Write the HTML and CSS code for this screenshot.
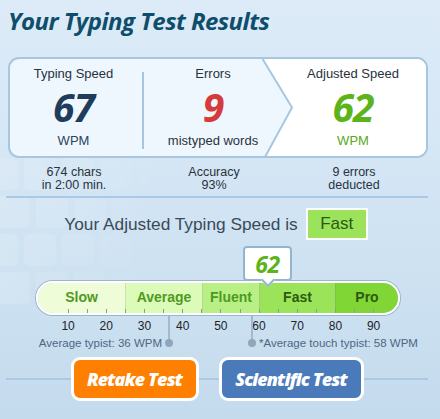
FILE: index.html
```html
<!DOCTYPE html>
<html>
<head>
<meta charset="utf-8">
<link rel="stylesheet" href="styles.css">
</head>
<body>
<div class="keys" aria-hidden="true">
  <i></i><i></i><i></i><i></i><i></i>
  <i></i><i></i><i></i><i></i><i></i>
  <i></i><i></i><i></i><i></i><i></i>
  <i></i><i></i><i></i><i></i><i></i>
</div>
<div class="page">
  <h1 class="title">Your Typing Test Results</h1>
  <div class="card">
    <div class="col col-speed">
      <div class="label">Typing Speed</div>
      <div class="big big-speed">67</div>
      <div class="unit">WPM</div>
    </div>
    <div class="divider"></div>
    <div class="col col-errors">
      <div class="label">Errors</div>
      <div class="big big-errors">9</div>
      <div class="unit">mistyped words</div>
    </div>
    <div class="col col-adjusted">
      <svg class="chevron" width="34" height="97" viewBox="0 0 34 97"><polyline points="0,-1 30,48.5 3,98" fill="none" stroke="#a7c7e0" stroke-width="2"/></svg>
      <div class="col-inner">
        <div class="label">Adjusted Speed</div>
        <div class="big big-adjusted">62</div>
        <div class="unit unit-green">WPM</div>
      </div>
    </div>
  </div>
  <div class="stats">
    <div>674 chars<br>in 2:00 min.</div>
    <div>Accuracy<br>93%</div>
    <div>9 errors<br>deducted</div>
  </div>
  <div class="rule"></div>
  <div class="verdict">
    <span class="verdict-text">Your Adjusted Typing Speed is</span>
    <span class="badge">Fast</span>
  </div>
  <div class="scale">
    <div class="tooltip">62</div>
    <div class="bar">
      <div class="seg seg-slow">Slow</div>
      <div class="seg seg-average">Average</div>
      <div class="seg seg-fluent">Fluent</div>
      <div class="seg seg-fast">Fast</div>
      <div class="seg seg-pro">Pro</div>
    </div>
    <div class="labels">
      <span>10</span><span>20</span><span>30</span><span>40</span><span>50</span><span>60</span><span>70</span><span>80</span><span>90</span>
    </div>
    <div class="pin pin-avg"><span class="pin-label">Average typist: 36 WPM</span></div>
    <div class="pin pin-touch"><span class="pin-label">*Average touch typist: 58 WPM</span></div>
  </div>
  <div class="actions">
    <a class="btn btn-orange">Retake Test</a>
    <a class="btn btn-blue">Scientific Test</a>
  </div>
</div>
</body>
</html>
```
FILE: styles.css
```css
html, body {
  margin: 0;
  padding: 0;
}
body {
  position: relative;
  width: 440px;
  height: 419px;
  overflow: hidden;
  background: linear-gradient(to bottom, #ddebf8 0%, #d3e5f4 45%, #c4dbed 100%);
  font-family: "Liberation Sans", Arial, sans-serif;
  color: #2a3340;
}
.keys {
  position: absolute;
  left: -14px;
  top: 158px;
  display: grid;
  grid-template-columns: repeat(5, 32px);
  grid-auto-rows: 32px;
  gap: 6px;
  -webkit-mask-image: linear-gradient(to right, #000 0%, rgba(0,0,0,0.5) 55%, transparent 100%);
  mask-image: linear-gradient(to right, #000 0%, rgba(0,0,0,0.5) 55%, transparent 100%);
  z-index: 0;
}
.keys i {
  display: block;
  border-radius: 5px;
  background: rgba(255, 255, 255, 0.16);
}
.keys i:nth-child(10n+6),
.keys i:nth-child(10n+7),
.keys i:nth-child(10n+8),
.keys i:nth-child(10n+9),
.keys i:nth-child(10n+10) {
  transform: translateX(12px);
}
.page {
  position: relative;
  z-index: 1;
  padding: 0 12px 0 8px;
}
.title {
  margin: 0;
  height: 57px;
  box-sizing: border-box;
  padding-top: 6px;
  font-family: "Open Sans", sans-serif;
  font-style: italic;
  font-weight: 700;
  font-size: 24px;
  line-height: 30px;
  letter-spacing: -0.55px;
  color: #0e4e6c;
}
.card {
  display: flex;
  height: 101px;
  box-sizing: border-box;
  border: 2px solid #a7c7e0;
  border-radius: 11px;
  background: #eff7fe;
  overflow: hidden;
}
.col {
  display: flex;
  flex-direction: column;
  align-items: center;
  padding-top: 7px;
  box-sizing: border-box;
  text-align: center;
}
.col-speed {
  width: 132px;
  padding-right: 5px;
}
.divider {
  width: 2px;
  background: #a9c5dd;
  margin: 13px 0 7px;
}
.col-errors {
  width: 118px;
  padding-left: 20px;
}
.col-adjusted {
  flex: 1;
  position: relative;
  padding-top: 0;
}
.col-adjusted::before {
  content: "";
  position: absolute;
  inset: 0;
  background: #fff;
  clip-path: polygon(0 0, 100% 0, 100% 100%, 3px 100%, 30px 50%);
}
.chevron {
  position: absolute;
  left: 0;
  top: 0;
}
.col-inner {
  position: relative;
  display: flex;
  flex-direction: column;
  align-items: center;
  padding: 7px 0 0 18px;
  width: 100%;
  box-sizing: border-box;
}
.label {
  font-size: 13px;
  line-height: 16px;
  color: #27313d;
}
.big {
  margin-top: 4px;
  font-family: "Open Sans", sans-serif;
  font-style: italic;
  font-weight: 700;
  font-size: 39px;
  line-height: 42px;
  letter-spacing: -1px;
}
.big-speed { color: #1f3c5c; }
.big-errors { color: #d63a3a; }
.big-adjusted { color: #5cb41a; }
.unit {
  margin-top: 5px;
  font-size: 13px;
  line-height: 16px;
  color: #2c4560;
}
.col-errors .unit { color: #2a323c; }
.unit-green { color: #5aa81c; }
.stats {
  display: grid;
  grid-template-columns: repeat(3, 140px);
  margin-left: -4px;
  padding-top: 8px;
  font-size: 12.5px;
  line-height: 13px;
  text-align: center;
  color: #2a323c;
}
.rule {
  height: 2px;
  background: #a9c9e6;
  margin: 4px 0 0 -2px;
}
.verdict {
  display: flex;
  justify-content: center;
  align-items: center;
  gap: 8px;
  margin-top: 10px;
  padding-right: 4px;
}
.verdict-text {
  font-size: 17.3px;
  color: #3b4a59;
}
.badge {
  display: flex;
  align-items: center;
  justify-content: center;
  width: 62px;
  height: 32px;
  box-sizing: border-box;
  border: 2px solid #fff;
  background: #9be35a;
  font-size: 17px;
  color: #2c5812;
}
.scale {
  position: relative;
  padding-top: 41px;
}
.tooltip {
  position: absolute;
  left: 235px;
  top: 6px;
  width: 49px;
  height: 35px;
  box-sizing: border-box;
  border: 2px solid #92b5d0;
  border-radius: 4px;
  background: #fff;
  z-index: 2;
  display: flex;
  align-items: center;
  justify-content: center;
  font-family: "Open Sans", sans-serif;
  font-style: italic;
  font-weight: 700;
  font-size: 23px;
  color: #5cb41a;
  letter-spacing: -0.5px;
}
.tooltip::after {
  content: "";
  position: absolute;
  left: 18px;
  bottom: -6px;
  width: 8px;
  height: 8px;
  background: #fff;
  border-right: 2px solid #92b5d0;
  border-bottom: 2px solid #92b5d0;
  transform: rotate(45deg);
}
.bar {
  position: relative;
  margin-left: 28px;
  width: 364px;
  height: 34px;
  box-sizing: border-box;
  border: 2px solid #fff;
  border-radius: 17px;
  box-shadow: 0 0 0 1px #9bb5ca;
  display: flex;
  overflow: hidden;
}
.bar::after {
  content: "";
  position: absolute;
  left: 30px;
  bottom: 0;
  width: 306px;
  height: 4px;
  background: repeating-linear-gradient(to right, #8f9c88 0 1px, transparent 1px 19.06px);
}
.seg {
  display: flex;
  align-items: center;
  justify-content: center;
  padding-bottom: 2px;
  box-sizing: border-box;
  font-size: 14px;
  font-weight: 700;
  color: #4f9a1f;
}
.seg-slow { width: 87px; background: #effcd8; }
.seg-average { width: 77px; background: #dcfab8; border-left: 1px solid #c9e3b0; }
.seg-fluent { width: 57px; background: #b9f086; border-left: 1px solid #b7d99a; }
.seg-fast { width: 76px; background: #9be45a; border-left: 1px solid #9fcd7a; color: #2d5a10; }
.seg-pro { width: 63px; background: #80d634; border-left: 1px solid #86bd58; color: #2d5a10; }
.labels {
  display: flex;
  margin: 4px 0 0 41px;
  font-size: 12px;
  line-height: 14px;
  color: #1e2328;
}
.labels span {
  width: 38.2px;
  text-align: center;
}
.pin {
  position: absolute;
  top: 75px;
  width: 2px;
  height: 28px;
  background: #a3b9cc;
}
.pin::after {
  content: "";
  position: absolute;
  left: -3px;
  bottom: -4px;
  width: 8px;
  height: 8px;
  border-radius: 50%;
  background: #8fa6bb;
}
.pin-avg { left: 160px; }
.pin-touch { left: 243px; }
.pin-label {
  position: absolute;
  bottom: -7px;
  white-space: nowrap;
  font-size: 11.5px;
  line-height: 14px;
  color: #4d6882;
}
.pin-avg .pin-label { right: 8px; }
.pin-touch .pin-label { left: 8px; }
.actions {
  display: flex;
  justify-content: center;
  gap: 20px;
  margin: 24px 0 0 -2px;
  background: linear-gradient(#a9c9e6, #a9c9e6) no-repeat center / 100% 2px;
}
.btn {
  display: flex;
  align-items: center;
  justify-content: center;
  height: 44px;
  box-sizing: border-box;
  border: 3px solid #fff;
  border-radius: 9px;
  color: #fff;
  font-family: "Open Sans", sans-serif;
  font-style: italic;
  font-weight: 800;
  font-size: 18px;
  letter-spacing: -0.9px;
}
.btn-orange { width: 128px; background: #ff8000; }
.btn-blue { width: 145px; background: #4a7aba; }
```
